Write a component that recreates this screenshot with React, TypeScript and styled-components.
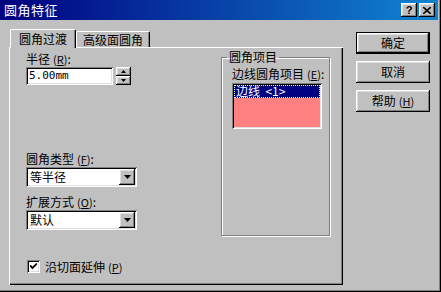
import type { ReactNode } from "react";
import styled, { createGlobalStyle, css } from "styled-components";

const GlobalStyle = createGlobalStyle`
  html, body {
    margin: 0;
    padding: 0;
    background: #c0c0c0;
  }
  body {
    font-family: "Noto Sans CJK SC", "DejaVu Sans", sans-serif;
    font-size: 12px;
    color: #000;
  }
`;

const raised = css`
  box-shadow: inset -1px -1px #000, inset 1px 1px #fff, inset -2px -2px #808080,
    inset 2px 2px #dfdfdf;
`;

const sunken = css`
  box-shadow: inset 1px 1px #808080, inset -1px -1px #fff, inset 2px 2px #000,
    inset -2px -2px #dfdfdf;
`;

const Window = styled.div`
  width: 441px;
  height: 292px;
  box-sizing: border-box;
  background: #c0c0c0;
  display: flex;
  flex-direction: column;
  box-shadow: inset -1px -1px #000, inset -2px -2px #808080;
`;

const TitleBar = styled.div`
  height: 20px;
  margin-right: 3px;
  display: flex;
  align-items: center;
  padding: 0 3px 0 4px;
  background: linear-gradient(90deg, #000080, #1084d0);
  color: #fff;
  font-size: 13px;
  line-height: 14px;
`;

const Title = styled.span`
  flex: 1;
  letter-spacing: 0.5px;
`;

const TitleButton = styled.div<{ $gap?: boolean }>`
  width: 16px;
  height: 14px;
  margin-left: ${(p) => (p.$gap ? "2px" : "0")};
  background: #c0c0c0;
  ${raised};
  display: flex;
  align-items: center;
  justify-content: center;
  color: #000;
  font-family: "Liberation Sans", sans-serif;
  font-weight: bold;
  font-size: 11px;
`;

const Body = styled.div`
  display: flex;
  padding: 9px 0 0 9px;
  gap: 13px;
`;

const LeftCol = styled.div`
  width: 334px;
  display: flex;
  flex-direction: column;
`;

const TabRow = styled.div`
  display: flex;
  align-items: flex-end;
  height: 18px;
  padding-left: 1px;
  position: relative;
  z-index: 1;
`;

const Tab = styled.div<{ $active?: boolean }>`
  box-sizing: border-box;
  height: ${(p) => (p.$active ? "19px" : "16px")};
  margin-bottom: ${(p) => (p.$active ? "-1px" : "0")};
  padding: ${(p) => (p.$active ? "2px 8px 0" : "1px 6px 0")};
  background: #c0c0c0;
  border-left: 1px solid #fff;
  border-top: 1px solid #fff;
  border-right: 1px solid #000;
  border-top-left-radius: 2px;
  border-top-right-radius: 2px;
  box-shadow: inset -1px 0 #808080;
  line-height: 14px;
  white-space: nowrap;
`;

const Panel = styled.div`
  height: 238px;
  box-sizing: border-box;
  display: flex;
  padding: 4px 0 0 17px;
  box-shadow: inset 1px 1px #fff, inset -1px -1px #000, inset -2px -2px #808080;
`;

const Controls = styled.div`
  width: 195px;
  display: flex;
  flex-direction: column;
`;

const Label = styled.div<{ $top?: number }>`
  margin-top: ${(p) => p.$top ?? 0}px;
  line-height: 14px;
  height: 14px;
  white-space: nowrap;
`;

const Key = styled.span`
  font-size: 11px;
  margin-left: 3px;
  & u {
    text-underline-offset: 1px;
  }
`;

const FieldRow = styled.div`
  display: flex;
  gap: 3px;
  margin-top: 1px;
`;

const TextField = styled.div<{ $width: number }>`
  width: ${(p) => p.$width}px;
  height: 18px;
  box-sizing: border-box;
  background: #fff;
  ${sunken};
  padding: 2px 3px;
  line-height: 14px;
  font-family: "DejaVu Sans Mono", monospace;
  font-size: 11px;
  display: flex;
  align-items: center;
`;

const Spinner = styled.div`
  width: 15px;
  height: 18px;
  display: flex;
  flex-direction: column;
`;

const SpinButton = styled.div`
  flex: 1;
  background: #c0c0c0;
  ${raised};
  display: flex;
  align-items: center;
  justify-content: center;
`;

const Combo = styled.div`
  width: 111px;
  height: 20px;
  box-sizing: border-box;
  background: #fff;
  ${sunken};
  display: flex;
  align-items: center;
  padding: 2px;
  margin-top: 1px;
`;

const ComboText = styled.span`
  flex: 1;
  padding-left: 2px;
  line-height: 14px;
`;

const DropButton = styled.div`
  width: 16px;
  height: 16px;
  background: #c0c0c0;
  ${raised};
  display: flex;
  align-items: center;
  justify-content: center;
`;

const CheckRow = styled.div`
  display: flex;
  align-items: center;
  gap: 5px;
  margin-top: 28px;
  padding-left: 1px;
`;

const CheckBox = styled.div`
  width: 13px;
  height: 13px;
  box-sizing: border-box;
  background: #fff;
  ${sunken};
  display: flex;
  align-items: center;
  justify-content: center;
`;

const Group = styled.fieldset`
  width: 109px;
  height: 185px;
  box-sizing: border-box;
  margin: 0;
  padding: 0 0 0 10px;
  border: 1px solid #808080;
  box-shadow: inset 1px 1px #fff, 1px 1px #fff;
`;

const Legend = styled.legend`
  padding: 0 2px;
  margin-left: -5px;
  line-height: 12px;
  height: 12px;
`;

const ListBox = styled.div`
  width: 90px;
  height: 46px;
  box-sizing: border-box;
  margin-top: 2px;
  padding: 2px;
  background: #ff8080;
  ${sunken};
`;

const ListItem = styled.div<{ $selected?: boolean }>`
  height: 13px;
  line-height: 12px;
  padding-left: 2px;
  box-sizing: border-box;
  background: ${(p) => (p.$selected ? "#000080" : "transparent")};
  color: ${(p) => (p.$selected ? "#fff" : "#000")};
  outline: ${(p) => (p.$selected ? "1px dotted #ffffc0" : "none")};
  outline-offset: -1px;
  white-space: pre;
`;

const ButtonCol = styled.div`
  display: flex;
  flex-direction: column;
  gap: 7px;
  padding-top: 3px;
`;

const DialogButton = styled.div<{ $default?: boolean }>`
  width: 74px;
  height: 22px;
  box-sizing: border-box;
  background: #c0c0c0;
  display: flex;
  align-items: center;
  justify-content: center;
  line-height: 14px;
  ${(p) =>
    p.$default
      ? css`
          border: 1px solid #000;
          box-shadow: inset -1px -1px #000, inset 1px 1px #fff,
            inset -2px -2px #808080, inset 2px 2px #dfdfdf;
        `
      : raised};
`;

function Arrow({ up }: { up?: boolean }): ReactNode {
  return (
    <svg width="7" height="4" viewBox="0 0 7 4">
      <path d={up ? "M3.5 0 L7 4 L0 4 Z" : "M0 0 L7 0 L3.5 4 Z"} fill="#000" />
    </svg>
  );
}

function SmallArrow({ up }: { up?: boolean }): ReactNode {
  return (
    <svg width="5" height="3" viewBox="0 0 5 3">
      <path d={up ? "M2.5 0 L5 3 L0 3 Z" : "M0 0 L5 0 L2.5 3 Z"} fill="#000" />
    </svg>
  );
}

function Accel({ k }: { k: string }): ReactNode {
  return (
    <Key>
      (<u>{k}</u>)
    </Key>
  );
}

export default function App(): ReactNode {
  return (
    <>
      <GlobalStyle />
      <Window>
        <TitleBar>
          <Title>圆角特征</Title>
          <TitleButton>?</TitleButton>
          <TitleButton $gap>
            <svg width="8" height="7" viewBox="0 0 8 7">
              <path d="M0 0 L8 7 M8 0 L0 7" stroke="#000" strokeWidth="1.6" />
            </svg>
          </TitleButton>
        </TitleBar>
        <Body>
          <LeftCol>
            <TabRow>
              <Tab $active>圆角过渡</Tab>
              <Tab>高级面圆角</Tab>
            </TabRow>
            <Panel>
              <Controls>
                <Label $top={1}>
                  半径<Accel k="R" />:
                </Label>
                <FieldRow>
                  <TextField $width={87}>5.00mm</TextField>
                  <Spinner>
                    <SpinButton>
                      <SmallArrow up />
                    </SpinButton>
                    <SpinButton>
                      <SmallArrow />
                    </SpinButton>
                  </Spinner>
                </FieldRow>
                <Label $top={67}>
                  圆角类型<Accel k="F" />:
                </Label>
                <Combo>
                  <ComboText>等半径</ComboText>
                  <DropButton>
                    <Arrow />
                  </DropButton>
                </Combo>
                <Label $top={8}>
                  扩展方式<Accel k="O" />:
                </Label>
                <Combo>
                  <ComboText>默认</ComboText>
                  <DropButton>
                    <Arrow />
                  </DropButton>
                </Combo>
                <CheckRow>
                  <CheckBox>
                    <svg width="7" height="7" viewBox="0 0 7 7">
                      <path d="M0 2.5 L2.5 5 L7 0.5" stroke="#000" strokeWidth="1.8" fill="none" />
                    </svg>
                  </CheckBox>
                  <span>
                    沿切面延伸<Accel k="P" />
                  </span>
                </CheckRow>
              </Controls>
              <Group>
                <Legend>圆角项目</Legend>
                <Label $top={4}>
                  边线圆角项目<Accel k="E" />:
                </Label>
                <ListBox>
                  <ListItem $selected>{"边线  <1>"}</ListItem>
                </ListBox>
              </Group>
            </Panel>
          </LeftCol>
          <ButtonCol>
            <DialogButton $default>确定</DialogButton>
            <DialogButton>取消</DialogButton>
            <DialogButton>
              帮助<Accel k="H" />
            </DialogButton>
          </ButtonCol>
        </Body>
      </Window>
    </>
  );
}
